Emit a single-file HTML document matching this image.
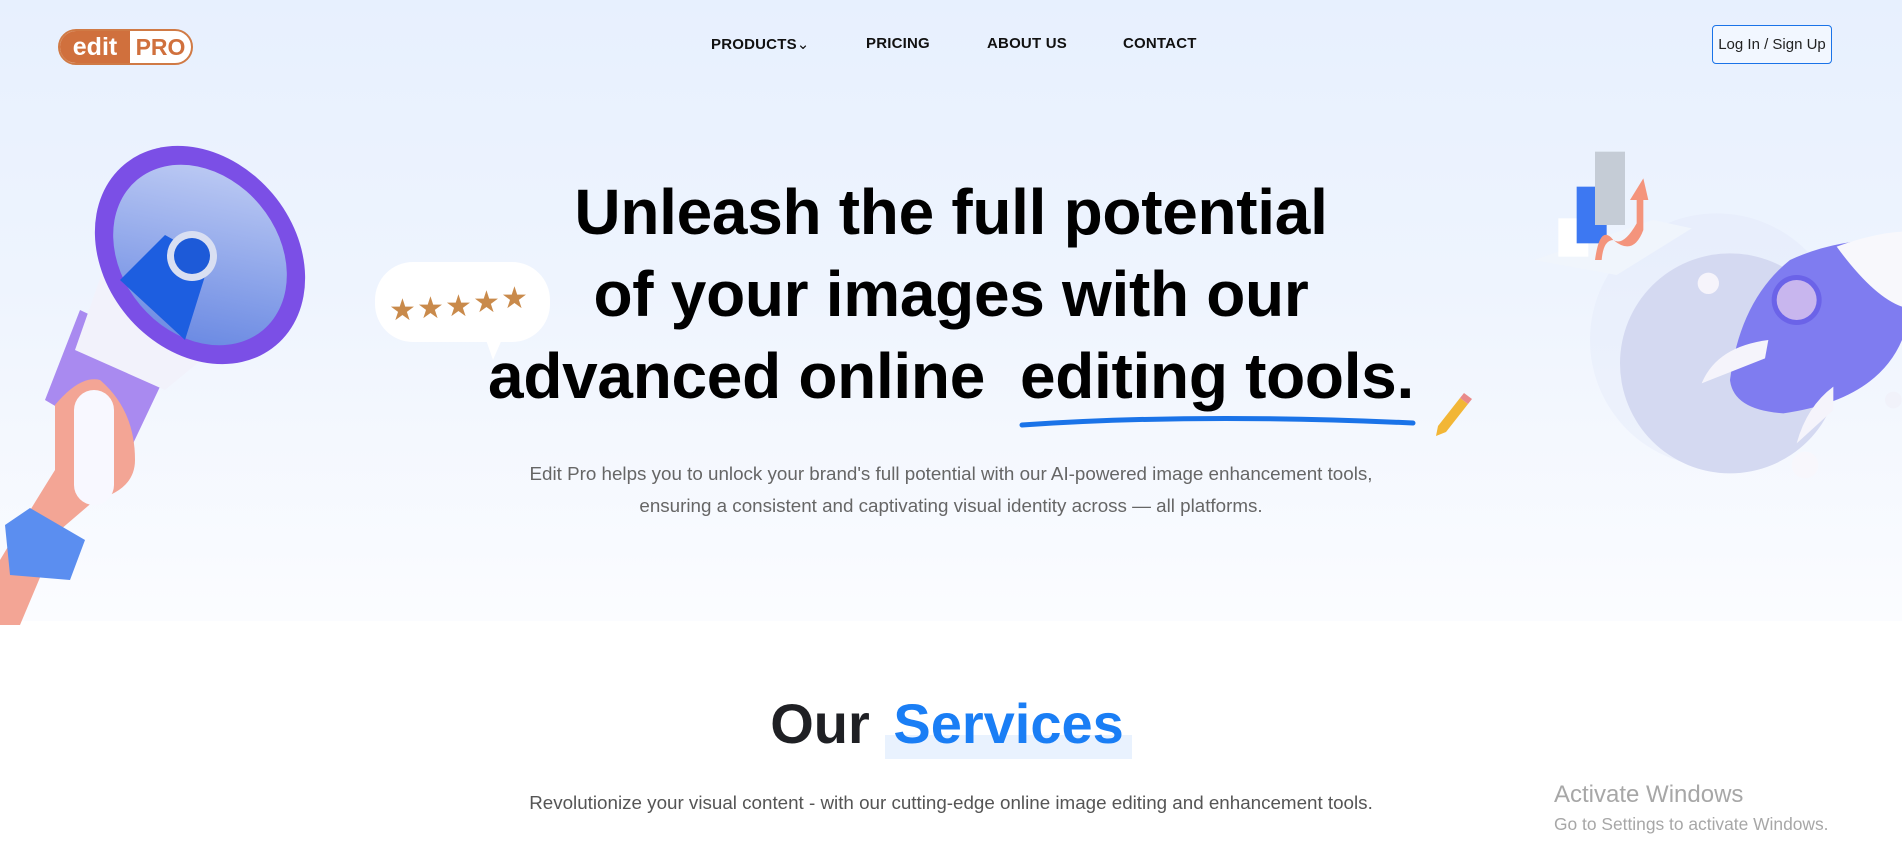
<!DOCTYPE html>
<html><head><meta charset="utf-8"><style>
*{margin:0;padding:0;box-sizing:border-box}
body{width:1902px;height:852px;overflow:hidden;background:#fff;font-family:"Liberation Sans",Arial,sans-serif;position:relative}
.hero{position:absolute;left:0;top:0;width:1902px;height:621px;background:linear-gradient(180deg,#e7f0fe 0%,#eef4fe 45%,#fbfcff 100%)}
.logo{position:absolute;left:58px;top:29px;width:135px;height:36px;border:2px solid #d07a45;border-radius:18px;overflow:hidden;display:flex;background:#fff}
.logo .a{background:#d0703d;color:#fff;font-weight:bold;font-size:25px;width:70px;display:flex;align-items:center;justify-content:center;line-height:1}
.logo .b{color:#d0703d;font-weight:bold;font-size:23px;flex:1;display:flex;align-items:center;justify-content:center;line-height:1}
.nav{position:absolute;top:35px;font-size:15px;font-weight:bold;color:#111;letter-spacing:0.2px}
.btn{position:absolute;left:1712px;top:25px;width:120px;height:39px;border:1px solid #1a73e8;border-radius:4px;font-size:15px;color:#222;display:flex;align-items:center;justify-content:center;background:#f2f7ff}
h1{position:absolute;left:0;width:1902px;top:171px;text-align:center;font-size:64px;line-height:82px;font-weight:bold;color:#000;letter-spacing:-0.3px}
.p{position:absolute;left:0;width:1902px;top:458px;text-align:center;font-size:18.8px;line-height:32px;color:#666}
.svc{position:absolute;left:0;width:1902px;top:691px;text-align:center;font-size:56px;font-weight:bold;color:#1f2024;line-height:66px}
.svc span{color:#1a7ef5;background:linear-gradient(transparent 64%,#e9f2fe 64%);padding:0 8px 4px}
.sub{position:absolute;left:0;width:1902px;top:792px;text-align:center;font-size:18.8px;color:#555}
.win1{position:absolute;left:1554px;top:781px;font-size:24px;color:#a7a7a7}
.win2{position:absolute;left:1554px;top:814px;font-size:17.4px;color:#a7a7a7}
</style></head><body>
<div class="hero"></div>
<div class="logo"><div class="a">edit</div><div class="b">PRO</div></div>
<div class="nav" style="left:711px">PRODUCTS<span style="font-weight:normal">&#8964;</span></div>
<div class="nav" style="left:866px">PRICING</div>
<div class="nav" style="left:987px">ABOUT US</div>
<div class="nav" style="left:1123px">CONTACT</div>
<div class="btn">Log In / Sign Up</div>

<svg style="position:absolute;left:0;top:130px" width="340" height="495" viewBox="0 0 340 495">
<defs><linearGradient id="cone" x1="0" y1="0" x2="1" y2="1"><stop offset="0" stop-color="#c9d4f6"/><stop offset="1" stop-color="#5d7fe0"/></linearGradient></defs>
<path d="M45 270 L80 180 L175 225 L130 320 Z" fill="#a98af0"/>
<path d="M75 220 L110 120 L250 190 L165 260 Z" fill="#f2f2fb"/>
<ellipse cx="200" cy="125" rx="118" ry="95" transform="rotate(50 200 125)" fill="#7b4fe6"/>
<ellipse cx="200" cy="125" rx="98" ry="78" transform="rotate(50 200 125)" fill="url(#cone)"/>
<path d="M120 150 L165 105 L210 130 L185 210 Z" fill="#1d5ee0"/>
<circle cx="192" cy="126" r="25" fill="#d9dff2"/><circle cx="192" cy="126" r="18" fill="#1d5ad8"/>
<path d="M55 275 Q80 245 100 250 Q135 280 135 330 Q135 360 95 370 L60 400 L20 495 L0 495 L0 430 Q30 380 55 340 Z" fill="#f3a595"/>
<rect x="74" y="260" width="40" height="115" rx="20" fill="#f8f8ff"/>
<path d="M5 395 L30 378 L85 410 L70 450 L10 445 Z" fill="#5b8ef0"/>
</svg>

<svg style="position:absolute;left:375px;top:262px" width="180" height="100" viewBox="0 0 180 100">
<rect x="0" y="0" width="175" height="80" rx="38" fill="#fff"/>
<path d="M110 75 L118 98 L128 75 Z" fill="#fff"/>
<g fill="#c98a4b" font-size="30" font-family="DejaVu Sans">
<text x="14" y="58">★</text><text x="42" y="56">★</text><text x="70" y="54">★</text><text x="98" y="50">★</text><text x="126" y="46">★</text></g>
</svg>

<h1>Unleash the full potential<br>of your images with our<br>advanced online&nbsp; editing tools.</h1>
<svg style="position:absolute;left:1018px;top:392px" width="460" height="50">
<path d="M4 33 Q180 21 395 31" stroke="#1a73e8" stroke-width="5" fill="none" stroke-linecap="round"/>
<path d="M420 34 L442 6 L450 12 L428 40 L418 44 Z" fill="#f2b636"/>
<path d="M442 6 L446 1 L454 7 L450 12 Z" fill="#e98a8a"/>
</svg>
<div class="p">Edit Pro helps you to unlock your brand's full potential with our AI-powered image enhancement tools,<br>ensuring a consistent and captivating visual identity across — all platforms.</div>

<svg style="position:absolute;left:1500px;top:140px" width="402" height="400" viewBox="0 0 1206 1200">
<ellipse cx="650" cy="600" rx="380" ry="380" fill="#dfe6f7" opacity=".3"/>
<circle cx="690" cy="670" r="330" fill="#d4d9f1"/>
<path d="M100 360 L460 240 L575 265 L350 405 Z" fill="#f0f5fc"/>
<rect x="175" y="235" width="90" height="115" fill="#fff"/>
<rect x="230" y="140" width="90" height="170" fill="#3d78f2"/>
<rect x="285" y="35" width="90" height="220" fill="#c5ccd6"/>
<path d="M285 360 Q300 250 340 300 Q370 320 410 250 L410 180 L390 180 L430 115 L445 180 L430 180 L430 270 Q400 350 340 300 Q310 300 305 360 Z" fill="#f4947c"/>
<circle cx="625" cy="430" r="32" fill="#f6f4fb"/>
<circle cx="915" cy="975" r="40" fill="#f8f7fc"/>
<circle cx="1180" cy="780" r="25" fill="#f1f2fa"/>
<path d="M690 720 Q720 480 870 360 Q1020 290 1206 300 L1206 600 Q1130 780 850 820 Q700 810 690 720 Z" fill="#7f7cf0"/>
<path d="M1010 320 Q1120 280 1206 275 L1206 500 Q1120 470 1010 320 Z" fill="#f8f8fc"/>
<circle cx="890" cy="480" r="75" fill="#6b63e8"/><circle cx="890" cy="480" r="60" fill="#c8b6ee"/>
<path d="M605 730 Q650 620 805 600 L795 655 Z" fill="#f5f4fb"/>
<path d="M890 910 Q920 800 1000 740 L1000 810 Z" fill="#f5f4fb"/>
</svg>

<div class="svc">Our <span>Services</span></div>
<div class="sub">Revolutionize your visual content - with our cutting-edge online image editing and enhancement tools.</div>
<div class="win1">Activate Windows</div>
<div class="win2">Go to Settings to activate Windows.</div>
</body></html>
